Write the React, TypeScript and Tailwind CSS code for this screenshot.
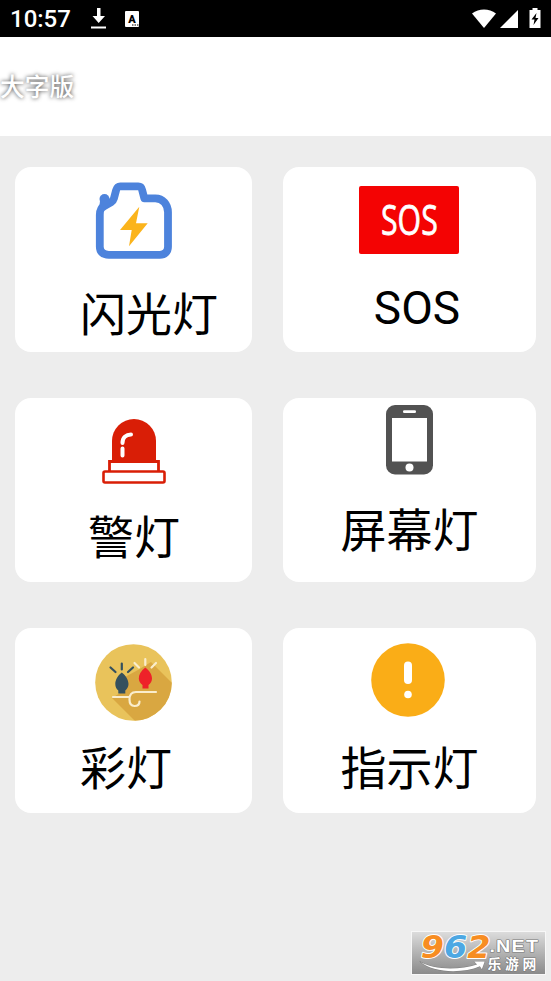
import type { ReactNode } from "react";

type CardProps = {
  icon: ReactNode;
  label: string;
  labelClass: string;
};

function CameraIcon() {
  return (
    <svg className="mt-[15px] h-[78px] w-[78px]" viewBox="0 0 78 78" fill="none">
      <path
        d="M4.800 33c0-5 1-7 4.500-9l7-4c1.800-1 2.200-2 2.600-3.500L21.100 8.300c.8-3 2-4 4.200-4h18c2 0 3.200 1 3.800 3.500L49.300 16.300h11c7.500 0 12.700 6 12.700 14v34.500c0 5-3.200 8-8.200 8h-51c-6 0-9-3-9-8Z"
        stroke="#4d83dc"
        strokeWidth="7.800"
        strokeLinejoin="round"
      />
      <circle cx="9.500" cy="17" r="5" fill="#4d83dc" />
      <path d="M5 19h12l-6 8H4Z" fill="#4d83dc" />
      <path d="M44.300 24.700 25 48h11.700L34 64.200l18.700-23H41Z" fill="#fbb41c" />
    </svg>
  );
}

function SosIcon() {
  return (
    <div className="mt-[19px] mr-[1px] flex h-[68px] w-[100px] items-center justify-center rounded-[2px] bg-[#f40303]">
      <span className="-mt-[2px] scale-x-[.72] font-['Open_Sans',sans-serif] text-[42px] leading-none font-medium text-white [-webkit-text-stroke:.8px_#fff]">
        SOS
      </span>
    </div>
  );
}

function SirenIcon() {
  return (
    <svg className="mt-[21px] h-[65px] w-[64px]" viewBox="0 0 64 65" fill="none">
      <path d="M10 44V22a22 22 0 0 1 44 0v22Z" fill="#d91e06" />
      <path d="M7.500 52v-9.500h49V52" fill="#fff" stroke="#d91e06" strokeWidth="2.800" />
      <rect x="1.500" y="52.500" width="61" height="11" rx="1.500" fill="#fff" stroke="#d91e06" strokeWidth="2.600" />
      <path d="M20.500 24c0-5.500 3.500-8.500 8.500-8.500M20.500 29.500v7" stroke="#fff" strokeWidth="4" strokeLinecap="round" />
    </svg>
  );
}

function PhoneIcon() {
  return (
    <svg className="mt-[7px] h-[70px] w-[47px]" viewBox="0 0 47 70">
      <rect width="47" height="69.500" rx="9" fill="#525252" />
      <rect x="6" y="13" width="35" height="43.500" fill="#fff" />
      <rect x="17" y="5.300" width="13" height="2.700" rx="1.300" fill="#fff" />
      <circle cx="23.500" cy="62.500" r="4" fill="#fff" />
    </svg>
  );
}

function LightsIcon() {
  return (
    <svg className="mt-[15.500px] h-[77px] w-[77px]" viewBox="0 0 77 77" fill="none">
      <defs>
        <clipPath id="disc">
          <circle cx="38.500" cy="38.500" r="38.300" />
        </clipPath>
      </defs>
      <circle cx="38.500" cy="38.500" r="38.300" fill="#e9c35b" />
      <path d="m56 18 21 21v38H40L17 54l13-8-2-12 15-8Z" fill="#d9a741" clipPath="url(#disc)" />
      <path d="M26.800 28.500c4.200 3 6.700 7.500 6.700 11.500 0 3-1.500 5-3.200 6.500V49.500h-7v-3c-2-1.500-3-3.500-3-6.500 0-4 2.300-8.500 6.500-11.500Z" fill="#34505e" />
      <path d="M50.300 23.500c4.200 3 6.700 7 6.700 11 0 3-1.500 5-3.500 6.500v3.500h-6v-3.500c-2-1.500-3.700-3.500-3.700-6.500 0-4 2.300-8 6.500-11Z" fill="#ee2229" />
      <path d="m15.500 23.500 5 4.500M26.800 19.500v6M38 23.500l-5 4.500" stroke="#34505e" strokeWidth="2.200" strokeLinecap="round" />
      <path
        d="m39.500 19 4.500 4.500M50.300 15v6M61 19l-4.500 4.500M18 53H34M61 48H41c-5 0-6.500 4-6.500 7.500 0 4 2 6.500 5 6.500 3 0 5-1.500 5-4.500"
        stroke="#faedcc"
        strokeWidth="2.200"
        strokeLinecap="round"
      />
    </svg>
  );
}

function AlertIcon() {
  return (
    <svg className="mt-[15px] mr-[3px] h-[74px] w-[74px]" viewBox="0 0 74 74">
      <circle cx="37" cy="37" r="36.800" fill="#faad17" />
      <rect x="33" y="18.500" width="8" height="22.500" rx="4" fill="#fff" />
      <circle cx="37" cy="51.500" r="3.800" fill="#fff" />
    </svg>
  );
}

const CARDS: (CardProps & { id: string })[] = [
  { id: "flash", icon: <CameraIcon />, label: "闪光灯", labelClass: "ml-[31px] mt-[32px]" },
  { id: "sos", icon: <SosIcon />, label: "SOS", labelClass: "ml-[15px] mt-[31px]" },
  { id: "police", icon: <SirenIcon />, label: "警灯", labelClass: "ml-[1px] mt-[31px]" },
  { id: "screen", icon: <PhoneIcon />, label: "屏幕灯", labelClass: "mt-[33px]" },
  { id: "color", icon: <LightsIcon />, label: "彩灯", labelClass: "mr-[15px] mt-[25.500px]" },
  { id: "signal", icon: <AlertIcon />, label: "指示灯", labelClass: "mt-[29px]" },
];

function Card({ icon, label, labelClass }: CardProps) {
  return (
    <button type="button" className="flex h-[184.500px] flex-col items-center rounded-2xl bg-white">
      {icon}
      <span className={`text-[46px] leading-[46px] whitespace-nowrap text-black ${labelClass}`}>{label}</span>
    </button>
  );
}

function StatusBar() {
  return (
    <div className="flex h-[37px] items-center bg-black text-white">
      <span className="ml-[10px] w-[61px] font-[Roboto,sans-serif] text-[24px] leading-none font-medium">10:57</span>
      <svg className="ml-[20px] h-[21px] w-[15px]" viewBox="0 0 15 21" fill="#fff">
        <path d="M6 0h3.500v8H14l-6.300 7L1.500 8H6ZM0 18.500h15v2H0Z" />
      </svg>
      <svg className="ml-[19px] h-[16px] w-[14px]" viewBox="0 0 14 16">
        <rect width="14" height="16" rx="1" fill="#fff" />
        <text x="7" y="11.500" textAnchor="middle" fontSize="11" fontWeight="900" fontFamily="Roboto, sans-serif">
          A
        </text>
        <path d="M7 14h1.500M9.500 14H11M12 14h1.500" stroke="#000" />
      </svg>
      <svg className="ml-auto h-[19px] w-[24px]" viewBox="0 0 24 19" fill="#fff">
        <path d="M0 4.500C7-.8 17-.8 24 4.500L12 19Z" />
      </svg>
      <svg className="ml-[4px] h-[18px] w-[18px]" viewBox="0 0 18 18" fill="#fff">
        <path d="M18 0v18H0Z" />
      </svg>
      <svg className="mr-[10px] ml-[11px] h-[20px] w-[12px] -translate-y-px" viewBox="0 0 11 20">
        <path d="M3 0h5v2h3v18H0V2h3Z" fill="#fff" />
        <path d="M7 5 2 11.500h3L4 17l5-7H6Z" fill="#000" />
      </svg>
    </div>
  );
}

function Watermark() {
  return (
    <div className="absolute right-[5px] bottom-[6px] h-[44px] w-[135px] border border-[#f7f7f7] bg-linear-to-b from-[#dcdcdc] to-[#8b8b8b]">
      <svg className="block h-full w-full overflow-visible" viewBox="0 0 135 44">
        <text
          x="7"
          y="27.500"
          textLength="73"
          lengthAdjust="spacingAndGlyphs"
          fontFamily="DejaVu Sans, sans-serif"
          fontWeight="700"
          fontStyle="italic"
          fontSize="33"
          stroke="#fff"
          strokeWidth="2"
          paintOrder="stroke"
          strokeLinejoin="round"
        >
          <tspan fill="#f78d22">9</tspan>
          <tspan fill="#4da8e3">6</tspan>
          <tspan fill="#f78d22">2</tspan>
        </text>
        <g fill="#fff" stroke="#777" strokeWidth="1.200" paintOrder="stroke" strokeLinejoin="round">
          <path d="M6 31c14 9 42 9 60 3l-3-3 11 0-3 8-2-3C50 44 20 43 6 31Z" strokeWidth=".7" />
          <text
            x="79"
            y="20.500"
            textLength="52"
            lengthAdjust="spacingAndGlyphs"
            letterSpacing="1"
            fontFamily="Liberation Sans, sans-serif"
            fontWeight="700"
            fontSize="17"
          >
            .NET
          </text>
          <text x="77" y="39" textLength="51" fontFamily="Noto Sans CJK SC, sans-serif" fontWeight="700" fontSize="14.500">
            乐游网
          </text>
        </g>
      </svg>
    </div>
  );
}

export default function App() {
  return (
    <div className="relative h-[981px] w-[551px] overflow-hidden bg-[#ededed] font-[Roboto,'Noto_Sans_CJK_SC',sans-serif]">
      <StatusBar />
      <header className="flex h-[99px] items-center bg-white">
        <h1 className="pt-[3px] text-[24.700px] leading-none font-medium text-white [text-shadow:0_0_4px_rgba(0,0,0,.75)]">
          大字版
        </h1>
      </header>
      <main className="grid grid-cols-[237px_253px] gap-x-[31px] gap-y-[46px] pt-[31px] pl-[15px]">
        {CARDS.map(({ id, ...card }) => (
          <Card key={id} {...card} />
        ))}
      </main>
      <Watermark />
    </div>
  );
}
